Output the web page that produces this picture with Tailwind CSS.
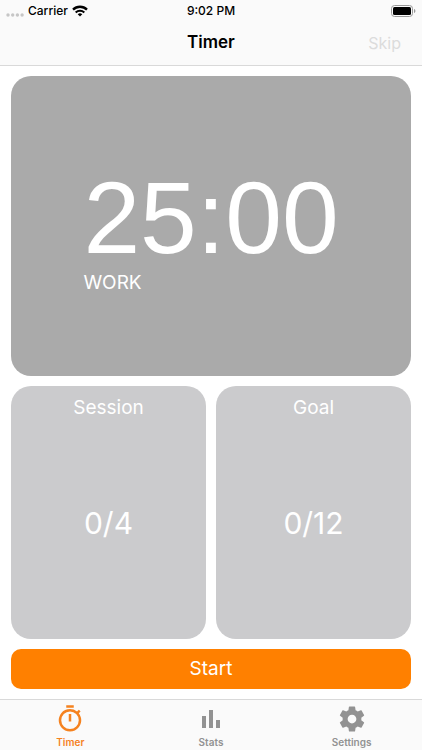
<!DOCTYPE html>
<html lang="en">
<head>
<meta charset="utf-8">
<meta name="viewport" content="width=device-width, initial-scale=1">
<title>Timer</title>
<script src="https://cdn.jsdelivr.net/npm/@tailwindcss/browser@4"></script>
</head>
<body class="flex min-h-screen flex-col bg-white font-['Inter',sans-serif] text-black">
  <header class="border-b border-[#d9d9d9] bg-[#fafafa]">
    <div class="grid h-[21px] grid-cols-3 items-center px-[6px] text-xs font-medium">
      <div class="flex items-center gap-1">
        <svg class="mt-2 h-[4px] w-[18px]" viewBox="0 0 18 4" fill="#c6c6c6" aria-hidden="true"><circle cx="2" cy="2" r="1.7"/><circle cx="6.7" cy="2" r="1.7"/><circle cx="11.4" cy="2" r="1.7"/><circle cx="16.1" cy="2" r="1.7"/></svg>
        <span>Carrier</span>
        <svg class="h-[12px] w-[16px]" viewBox="0 0 16 12" fill="none" stroke="#000" aria-hidden="true"><path d="M1 4.6a10 10 0 0 1 14 0" stroke-width="2.3"/><path d="M3.7 7.5a6.2 6.2 0 0 1 8.6 0" stroke-width="2.1"/><path d="M8 11.6 5.7 9.3a3.3 3.3 0 0 1 4.6 0z" fill="#000" stroke="none"/></svg>
      </div>
      <div class="text-center">9:02 PM</div>
      <svg class="h-[12px] w-[25px] justify-self-end" viewBox="0 0 25 12" aria-hidden="true"><rect x=".5" y=".5" width="21" height="11" rx="3" fill="none" stroke="#999"/><rect x="2" y="2" width="18" height="8" rx="1.5"/><path d="M23 4v4c.9-.4 1.4-1.100 1.400-2S23.900 4.400 23 4z" fill="#999"/></svg>
    </div>
    <div class="grid h-11 grid-cols-3 items-center px-[21px]">
      <h1 class="col-start-2 text-center text-[17px] font-semibold">Timer</h1>
      <button type="button" disabled class="justify-self-end text-[16px] text-[#dcdcdc]">Skip</button>
    </div>
  </header>

  <main class="grid flex-1 grid-cols-2 grid-rows-[299fr_253fr_40px] gap-[10px] px-[11px] py-[10px] text-white">
    <section class="col-span-2 flex items-center justify-center rounded-[20px] bg-[#aaaaaa] pt-2">
      <div>
        <div class="font-['Liberation_Sans',sans-serif] text-[102px] leading-[106px]">25:00</div>
        <div class="text-[19px] leading-6">WORK</div>
      </div>
    </section>
    <section class="flex flex-col rounded-[20px] bg-[#cbcbcd] pt-[10px] text-center">
      <h2 class="text-[19px] leading-6">Session</h2>
      <p class="flex flex-1 items-center justify-center pb-3 text-[30px]">0/4</p>
    </section>
    <section class="flex flex-col rounded-[20px] bg-[#cbcbcd] pt-[10px] text-center">
      <h2 class="text-[19px] leading-6">Goal</h2>
      <p class="flex flex-1 items-center justify-center pb-3 text-[30px]">0/12</p>
    </section>
    <button type="button" class="col-span-2 rounded-[10px] bg-[#ff8000] text-[19px]">Start</button>
  </main>

  <nav class="grid h-[51px] grid-cols-3 border-t border-[#d9d9d9] bg-[#fafafa] pt-1 text-[10px] font-semibold leading-4 text-[#929292]">
    <a href="#timer" aria-current="page" class="flex flex-col items-center text-[#f5821f]">
      <svg class="size-[30px]" viewBox="0 0 24 24" fill="currentColor" aria-hidden="true"><path d="M15 1H9v2h6V1zm-4 13h2V8h-2v6zm8.030-6.610 1.420-1.420c-.43-.51-.9-.99-1.410-1.410l-1.420 1.420A8.962 8.962 0 0 0 12 4a9 9 0 1 0 7.030 3.390zM12 20a7 7 0 1 1 0-14 7 7 0 0 1 0 14z"/></svg>
      Timer
    </a>
    <a href="#stats" class="flex flex-col items-center">
      <svg class="size-[30px]" viewBox="0 0 30 30" fill="currentColor" aria-hidden="true"><path d="M6 12h4v12H6zM13 6h4v18h-4zM20 16h4v8h-4z"/></svg>
      Stats
    </a>
    <a href="#settings" class="flex flex-col items-center">
      <svg class="size-[30px]" viewBox="0 0 24 24" fill="currentColor" aria-hidden="true"><path d="M19.430 12.980c.04-.32.07-.64.07-.98s-.03-.66-.07-.98l2.110-1.650c.19-.15.24-.42.12-.64l-2-3.460c-.12-.22-.39-.3-.61-.22l-2.490 1c-.52-.4-1.080-.73-1.690-.98l-.38-2.650A.488.488 0 0 0 14 2h-4c-.25 0-.46.18-.49.42l-.38 2.650c-.61.25-1.170.59-1.690.98l-2.490-1c-.23-.09-.49 0-.61.22l-2 3.460c-.13.22-.07.49.12.64l2.110 1.650c-.04.32-.07.65-.07.98s.03.66.07.98l-2.110 1.650c-.19.15-.24.42-.12.64l2 3.460c.12.22.39.3.61.22l2.490-1c.52.4 1.080.73 1.690.98l.38 2.650c.03.24.24.42.49.42h4c.25 0 .46-.18.49-.42l.38-2.650c.61-.25 1.170-.59 1.690-.98l2.490 1c.23.09.49 0 .61-.22l2-3.460c.12-.22.07-.49-.12-.64l-2.110-1.650zM12 15.500c-1.930 0-3.500-1.570-3.500-3.500s1.570-3.500 3.500-3.500 3.500 1.570 3.500 3.500-1.570 3.500-3.500 3.500z"/></svg>
      Settings
    </a>
  </nav>
</body>
</html>
